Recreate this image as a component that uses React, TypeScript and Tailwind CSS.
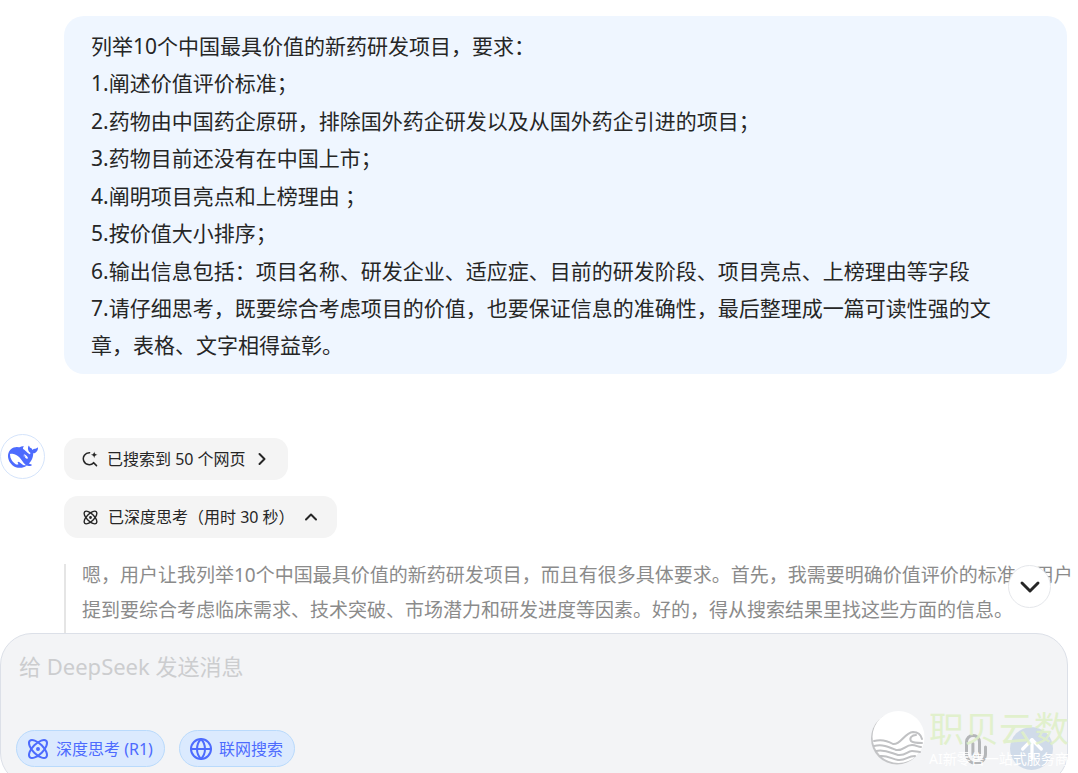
import { Atom, ArrowUp, ChevronDown, ChevronRight, ChevronUp, Globe } from 'lucide-react';
import type { ReactNode } from 'react';

const promptLines = [
  '列举10个中国最具价值的新药研发项目，要求：',
  '1.阐述价值评价标准；',
  '2.药物由中国药企原研，排除国外药企研发以及从国外药企引进的项目；',
  '3.药物目前还没有在中国上市；',
  '4.阐明项目亮点和上榜理由 ；',
  '5.按价值大小排序；',
  '6.输出信息包括：项目名称、研发企业、适应症、目前的研发阶段、项目亮点、上榜理由等字段',
  '7.请仔细思考，既要综合考虑项目的价值，也要保证信息的准确性，最后整理成一篇可读性强的文章，表格、文字相得益彰。',
];

function WhaleLogo() {
  return (
    <svg viewBox="0 0 24 24" className="size-[30px]" fill="#4d6bfe" aria-hidden="true">
      <path d="M23.748 4.482c-.254-.124-.364.113-.512.234-.051.039-.094.09-.137.136-.372.397-.806.657-1.373.626-.829-.046-1.537.214-2.163.848-.133-.782-.575-1.248-1.247-1.548-.352-.156-.708-.311-.955-.65-.172-.241-.219-.51-.305-.774-.055-.16-.11-.323-.293-.35-.2-.031-.278.136-.356.276-.313.572-.434 1.202-.422 1.84.027 1.436.633 2.58 1.838 3.393.137.093.172.187.129.323-.082.28-.18.552-.266.833-.055.179-.137.217-.329.14a5.526 5.526 0 01-1.736-1.18c-.857-.828-1.631-1.742-2.597-2.458a11.365 11.365 0 00-.689-.471c-.985-.957.13-1.743.388-1.836.27-.098.093-.432-.779-.428-.872.004-1.67.295-2.687.684a3.055 3.055 0 01-.465.137 9.597 9.597 0 00-2.883-.102c-1.885.21-3.39 1.102-4.497 2.623C.082 8.606-.231 10.684.152 12.85c.403 2.284 1.569 4.175 3.36 5.653 1.858 1.533 3.997 2.284 6.438 2.14 1.482-.085 3.133-.284 4.994-1.86.47.234.962.327 1.78.397.63.059 1.236-.03 1.705-.128.735-.156.684-.837.419-.961-2.155-1.004-1.682-.595-2.113-.926 1.096-1.296 2.746-2.642 3.392-7.003.05-.347.007-.565 0-.845-.004-.17.035-.237.23-.256a4.173 4.173 0 001.545-.475c1.396-.763 1.96-2.015 2.093-3.517.02-.23-.004-.467-.247-.588zM11.581 18c-2.089-1.642-3.102-2.183-3.52-2.16-.392.024-.321.471-.235.763.09.288.207.486.371.739.114.167.192.416-.113.603-.673.416-1.842-.14-1.897-.167-1.361-.802-2.5-1.86-3.301-3.307-.774-1.393-1.224-2.887-1.298-4.482-.02-.386.093-.522.477-.592a4.696 4.696 0 011.529-.039c2.132.312 3.946 1.265 5.468 2.774.868.86 1.525 1.887 2.202 2.891.72 1.066 1.494 2.082 2.48 2.914.348.292.625.514.891.677-.802.09-2.14.11-3.054-.614zm1-6.44a.306.306 0 01.415-.287.302.302 0 01.2.288.306.306 0 01-.31.307.303.303 0 01-.304-.308zm3.11 1.596c-.2.081-.399.151-.59.16a1.245 1.245 0 01-.798-.254c-.274-.23-.47-.358-.552-.758a1.73 1.73 0 01.016-.588c.07-.327-.008-.537-.239-.727-.187-.156-.426-.199-.688-.199a.559.559 0 01-.254-.078c-.11-.054-.2-.19-.114-.358.028-.054.16-.186.192-.21.356-.202.767-.136 1.146.016.352.144.618.408 1.001.782.391.451.462.576.685.914.176.265.336.537.445.848.067.195-.019.354-.25.452z" />
    </svg>
  );
}

function SearchSparkIcon() {
  return (
    <svg viewBox="0 0 16 16" className="size-4" fill="none" aria-hidden="true">
      <path d="M7.600 1.700a6 6 0 1 0 4 10.200M11.500 11.600l3 3" stroke="#262626" strokeWidth="1.5" strokeLinecap="round" />
      <path d="M12.2.4c.4 2.3 1 2.9 3.4 3.4-2.4.5-3 1.1-3.4 3.4-.4-2.3-1-2.9-3.4-3.4 2.4-.5 3-1.1 3.4-3.4z" fill="#262626" />
    </svg>
  );
}

function ClipIcon() {
  return (
    <svg viewBox="0 0 24 32" className="h-8 w-6" fill="none" stroke="#b4b6b8" strokeWidth="3" strokeLinecap="round" aria-hidden="true">
      <path d="M21.5 14v7a9.500 9.500 0 0 1-19 0V9a6.500 6.500 0 0 1 13 0v12a3.300 3.300 0 0 1-6.600 0V10.500" />
    </svg>
  );
}

function WaveLogo() {
  return (
    <svg viewBox="0 0 56 58" className="h-[58px] w-14 shrink-0" fill="none" aria-hidden="true">
      <circle cx="26" cy="28.500" r="26" fill="#c4c5c7" />
      <circle cx="27.500" cy="27" r="26" fill="#ffffff" />
      <g stroke="#c0c1c3" strokeWidth="2" strokeLinecap="round">
        <path d="M3 31c7-2 14 0 19 3 8 1 11-11 20-12 5 0 8 3 9 7" />
        <path d="M45 25c-4 0-7 3-5 6 2 2 7 2 11 2" />
        <path d="M3 36c9-2 15 1 22 4 8 1 9-5 16-5 4 0 6 2 9 2" />
        <path d="M5 41c9-2 15 2 22 4 8 1 9-4 14-4 4 0 5 1 8 1" />
        <path d="M9 46c7-1 12 3 18 4 8 1 9-4 17-4" />
      </g>
    </svg>
  );
}

function StatusChip({ icon, label, chevron }: { icon: ReactNode; label: string; chevron: ReactNode }) {
  return (
    <button
      type="button"
      className="flex h-[42px] items-center rounded-[14px] bg-[#f4f4f4] pr-4 pl-[18px] text-base text-[#262626]"
    >
      {icon}
      <span className="mr-[6px] ml-[9px]">{label}</span>
      {chevron}
    </button>
  );
}

function ModeButton({ icon, label }: { icon: ReactNode; label: string }) {
  return (
    <button
      type="button"
      aria-pressed="true"
      className="flex h-[37px] items-center gap-[6px] rounded-full border border-[#b9dafc] bg-[#dbeafe] pr-[11px] pl-[9px] text-base text-[#4d6bfe]"
    >
      {icon}
      <span>{label}</span>
    </button>
  );
}

function Composer() {
  return (
    <form className="relative -mb-3 mr-[10px] flex shrink-0 flex-col rounded-[32px] border border-[#dce0e8] bg-[#f3f4f6] pb-[17px]">
      {/* Jump to the latest message */}
      <button
        type="button"
        aria-label="滚动到底部"
        className="absolute right-4 bottom-full mb-[26px] flex size-[43px] items-center justify-center rounded-full border border-[#e5e7eb] bg-white text-[#262626]"
      >
        <ChevronDown className="size-8" strokeWidth={2.2} />
      </button>

      <textarea
        aria-label="消息"
        placeholder="给 DeepSeek 发送消息"
        className="h-24 resize-none px-[18px] pt-4 text-[22px] leading-8 outline-none placeholder:text-[#cccdcf]"
      />
      <div className="flex items-center gap-[14px] pr-[14px] pl-[15px]">
        <ModeButton icon={<Atom className="size-6" strokeWidth={2} />} label="深度思考 (R1)" />
        <ModeButton icon={<Globe className="size-6" strokeWidth={2} />} label="联网搜索" />
        <div className="ml-auto flex items-center gap-[22px]">
          <button type="button" aria-label="上传附件" className="-my-1">
            <ClipIcon />
          </button>
          <button
            type="submit"
            aria-label="发送"
            className="-my-1 flex size-[43px] items-center justify-center rounded-full bg-[#d0dbe9] text-white"
          >
            <ArrowUp className="size-8" strokeWidth={2.4} />
          </button>
        </div>
      </div>

      {/* Watermark */}
      <div className="pointer-events-none absolute -right-1 bottom-[15px] flex items-center gap-[2px]">
        <WaveLogo />
        <div className="w-[142px] whitespace-nowrap">
          <p className="text-[35px] leading-10 text-[#dff0c8]/90">职贝云数</p>
          <p className="text-sm text-white">AI新零售一站式服务商</p>
        </div>
      </div>
    </form>
  );
}

export default function App() {
  return (
    <div className="flex h-screen flex-col overflow-hidden bg-white font-['Noto_Sans','Noto_Sans_CJK_SC',sans-serif]">
      <main className="min-h-0 flex-1 overflow-hidden pt-4">
        {/* User message */}
        <div className="mr-[11px] ml-16 flex min-h-[358px] flex-col justify-between rounded-[20px] bg-[#eff6ff] pt-3 pr-10 pb-[10px] pl-[27px] text-[21px] leading-[37px] text-[#262626]">
          {promptLines.map((line) => (
            <p key={line}>{line}</p>
          ))}
        </div>

        {/* Assistant reply */}
        <div className="mt-[60px] flex gap-[19px]">
          <div className="flex size-[45px] shrink-0 items-center justify-center rounded-full border border-[#d5e4fb]">
            <WhaleLogo />
          </div>
          <div className="min-w-0 flex-1 pt-1">
            <div className="flex flex-col items-start gap-4">
              <StatusChip
                icon={<SearchSparkIcon />}
                label="已搜索到 50 个网页"
                chevron={<ChevronRight className="size-5" strokeWidth={2.4} />}
              />
              <StatusChip
                icon={<Atom className="size-[17px]" strokeWidth={2} />}
                label="已深度思考（用时 30 秒）"
                chevron={<ChevronUp className="size-5" strokeWidth={2.4} />}
              />
            </div>
            <div className="mt-[26px] flow-root border-l-2 border-[#e5e5e5] pb-10 pl-4 text-[19px] leading-[35px] text-[#8b8b8b]">
              <p className="-mt-[6px]">
                嗯，用户让我列举10个中国最具价值的新药研发项目，而且有很多具体要求。首先，我需要明确价值评价的标准。用户提到要综合考虑临床需求、技术突破、市场潜力和研发进度等因素。好的，得从搜索结果里找这些方面的信息。
              </p>
            </div>
          </div>
        </div>
      </main>
      <Composer />
    </div>
  );
}
